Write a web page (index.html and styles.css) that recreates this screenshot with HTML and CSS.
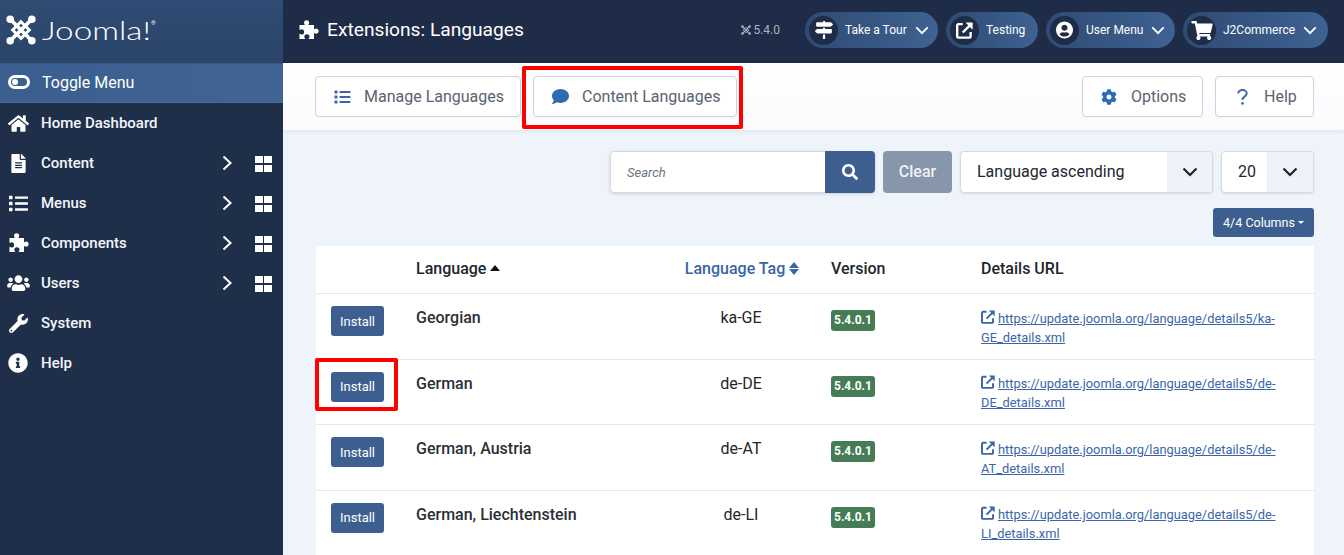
FILE: index.html
```html
<!DOCTYPE html>
<html lang="en">
<head>
<meta charset="utf-8">
<title>Extensions: Languages</title>
<link rel="stylesheet" href="styles.css">
</head>
<body>
<svg class="sprite" aria-hidden="true">
  <symbol id="i-home" viewBox="0 0 576 512"><path d="M280.37 148.26L96 300.11V464a16 16 0 0 0 16 16l112.06-.29a16 16 0 0 0 15.92-16V368a16 16 0 0 1 16-16h64a16 16 0 0 1 16 16v95.64a16 16 0 0 0 16 16.05L464 480a16 16 0 0 0 16-16V300L295.67 148.26a12.19 12.19 0 0 0-15.3 0zM571.6 251.47L488 182.56V44.05a12 12 0 0 0-12-12h-56a12 12 0 0 0-12 12v72.61L318.47 43a48 48 0 0 0-61 0L4.34 251.47a12 12 0 0 0-1.6 16.9l25.5 31A12 12 0 0 0 45.15 301l235.22-193.74a12.19 12.19 0 0 1 15.3 0L530.9 301a12 12 0 0 0 16.9-1.6l25.5-31a12 12 0 0 0-1.7-16.93z"/></symbol>
  <symbol id="i-puzzle" viewBox="0 0 20 20"><path d="M1 5H6.500C6.500 5 5.500 4 5.500 2.800A2.600 2.600 0 0 1 10.700 2.800C10.700 4 9.700 5 9.700 5H15.500V9.500C15.500 9.500 16.500 8.500 17.500 8.500A2.600 2.600 0 0 1 17.500 13.700C16.500 13.700 15.500 12.700 15.500 12.700V19H10C10 19 11 18 11 16.800A2.600 2.600 0 0 0 5.800 16.800C5.800 18 6.800 19 6.800 19H1V13.500C1 13.500 2 14.500 3 14.500A2.600 2.600 0 0 0 3 9.300C2 9.300 1 10.300 1 10.300Z"/></symbol>
  <symbol id="i-list" viewBox="0 0 512 512"><path d="M80 368H16a16 16 0 0 0-16 16v64a16 16 0 0 0 16 16h64a16 16 0 0 0 16-16v-64a16 16 0 0 0-16-16zm0-320H16A16 16 0 0 0 0 64v64a16 16 0 0 0 16 16h64a16 16 0 0 0 16-16V64a16 16 0 0 0-16-16zm0 160H16a16 16 0 0 0-16 16v64a16 16 0 0 0 16 16h64a16 16 0 0 0 16-16v-64a16 16 0 0 0-16-16zm416 176H176a16 16 0 0 0-16 16v32a16 16 0 0 0 16 16h320a16 16 0 0 0 16-16v-32a16 16 0 0 0-16-16zm0-320H176a16 16 0 0 0-16 16v32a16 16 0 0 0 16 16h320a16 16 0 0 0 16-16V80a16 16 0 0 0-16-16zm0 160H176a16 16 0 0 0-16 16v32a16 16 0 0 0 16 16h320a16 16 0 0 0 16-16v-32a16 16 0 0 0-16-16z"/></symbol>
  <symbol id="i-file" viewBox="0 0 384 512"><path d="M224 136V0H24C10.7 0 0 10.7 0 24v464c0 13.3 10.7 24 24 24h336c13.3 0 24-10.7 24-24V160H248c-13.2 0-24-10.8-24-24zm64 236c0 6.6-5.4 12-12 12H108c-6.6 0-12-5.4-12-12v-8c0-6.6 5.4-12 12-12h168c6.6 0 12 5.4 12 12v8zm0-64c0 6.6-5.4 12-12 12H108c-6.6 0-12-5.4-12-12v-8c0-6.6 5.4-12 12-12h168c6.6 0 12 5.4 12 12v8zm0-72v8c0 6.6-5.4 12-12 12H108c-6.6 0-12-5.4-12-12v-8c0-6.6 5.4-12 12-12h168c6.6 0 12 5.4 12 12zm96-114.1v6.1H256V0h6.1c6.4 0 12.5 2.5 17 7l97.9 98c4.5 4.5 7 10.6 7 16.9z"/></symbol>
  <symbol id="i-users" viewBox="0 0 640 512"><path d="M96 224c35.3 0 64-28.7 64-64s-28.7-64-64-64-64 28.7-64 64 28.7 64 64 64zm448 0c35.3 0 64-28.7 64-64s-28.7-64-64-64-64 28.7-64 64 28.7 64 64 64zm32 32h-64c-17.6 0-33.5 7.1-45.1 18.6 40.3 22.1 68.9 62 75.1 109.4h66c17.7 0 32-14.3 32-32v-32c0-35.3-28.7-64-64-64zm-256 0c61.9 0 112-50.1 112-112S381.9 32 320 32 208 82.1 208 144s50.1 112 112 112zm76.8 32h-8.3c-20.8 10-43.9 16-68.5 16s-47.6-6-68.5-16h-8.3C179.6 288 128 339.6 128 403.2V432c0 26.5 21.5 48 48 48h288c26.5 0 48-21.5 48-48v-28.8c0-63.6-51.6-115.2-115.2-115.2zm-223.7-13.4C161.5 263.1 145.6 256 128 256H64c-35.3 0-64 28.7-64 64v32c0 17.7 14.3 32 32 32h65.9c6.3-47.4 34.9-87.3 75.2-109.4z"/></symbol>
  <symbol id="i-wrench" viewBox="0 0 512 512"><path d="M507.73 109.1c-2.24-9.03-13.54-12.09-20.12-5.51l-74.36 74.36-67.88-11.31-11.31-67.88 74.36-74.36c6.62-6.62 3.43-17.9-5.66-20.16-47.38-11.74-99.55.91-136.58 37.93-39.64 39.64-50.55 97.1-34.05 147.2L18.74 402.76c-24.99 24.99-24.99 65.51 0 90.5 24.99 24.99 65.51 24.99 90.5 0l213.21-213.21c50.12 16.71 107.47 5.68 147.37-34.22 37.07-37.07 49.7-89.32 37.91-136.73zM64 472c-13.25 0-24-10.75-24-24 0-13.26 10.75-24 24-24s24 10.74 24 24c0 13.25-10.75 24-24 24z"/></symbol>
  <symbol id="i-info" viewBox="0 0 512 512"><path d="M256 8C119.043 8 8 119.083 8 256c0 136.997 111.043 248 248 248s248-111.003 248-248C504 119.083 392.957 8 256 8zm0 110c23.196 0 42 18.804 42 42s-18.804 42-42 42-42-18.804-42-42 18.804-42 42-42zm56 254c0 6.627-5.373 12-12 12h-88c-6.627 0-12-5.373-12-12v-24c0-6.627 5.373-12 12-12h12v-64h-12c-6.627 0-12-5.373-12-12v-24c0-6.627 5.373-12 12-12h64c6.627 0 12 5.373 12 12v100h12c6.627 0 12 5.373 12 12v24z"/></symbol>
  <symbol id="i-cart" viewBox="0 0 576 512"><path d="M528.12 301.319l47.273-208C578.806 78.301 567.391 64 551.99 64H159.208l-9.166-44.81C147.758 8.021 137.93 0 126.529 0H24C10.745 0 0 10.745 0 24v16c0 13.255 10.745 24 24 24h69.883l70.248 343.435C147.325 417.1 136 435.222 136 456c0 30.928 25.072 56 56 56s56-25.072 56-56c0-15.674-6.447-29.835-16.824-40h209.647C430.447 426.165 424 440.326 424 456c0 30.928 25.072 56 56 56s56-25.072 56-56c0-22.172-12.888-41.332-31.579-50.405l5.517-24.276c3.413-15.018-8.002-29.319-23.403-29.319H218.117l-6.545-32h293.145c11.206 0 20.92-7.754 23.403-18.681z"/></symbol>
  <symbol id="i-user" viewBox="0 0 496 512"><path d="M248 8C111 8 0 119 0 256s111 248 248 248 248-111 248-248S385 8 248 8zm0 96c48.6 0 88 39.4 88 88s-39.4 88-88 88-88-39.4-88-88 39.4-88 88-88zm0 344c-58.7 0-111.3-26.6-146.5-68.2 18.8-35.4 55.6-59.8 98.5-59.8 2.4 0 4.8.4 7.1 1.1 13 4.2 26.6 6.9 40.9 6.9 14.3 0 28-2.7 40.9-6.9 2.3-.7 4.7-1.1 7.1-1.1 42.9 0 79.7 24.4 98.5 59.8C359.3 421.4 306.7 448 248 448z"/></symbol>
  <symbol id="i-signs" viewBox="0 0 512 512"><path d="M507.31 84.69L464 41.37c-6-6-14.14-9.37-22.63-9.37H288V16c0-8.84-7.16-16-16-16h-32c-8.84 0-16 7.16-16 16v16H56c-13.25 0-24 10.75-24 24v80c0 13.25 10.75 24 24 24h385.37c8.49 0 16.62-3.37 22.63-9.37l43.31-43.31c6.25-6.26 6.25-16.38 0-22.63zM224 496c0 8.84 7.16 16 16 16h32c8.84 0 16-7.16 16-16V384h-64v112zm232-272H288v-32h-64v32H70.63c-8.49 0-16.62 3.37-22.63 9.37L4.69 276.69c-6.25 6.25-6.25 16.38 0 22.63L48 342.63c6 6 14.14 9.37 22.63 9.37H456c13.25 0 24-10.75 24-24v-80c0-13.25-10.75-24-24-24z"/></symbol>
  <symbol id="i-comment" viewBox="0 0 512 512"><path d="M256 32C114.6 32 0 125.1 0 240c0 49.6 21.4 95 57 130.7C44.5 421.1 2.7 466 2.2 466.5c-2.2 2.3-2.8 5.7-1.5 8.7S4.8 480 8 480c66.3 0 116-31.8 140.6-51.4 32.7 12.3 69 19.4 107.4 19.4 141.4 0 256-93.1 256-208S397.4 32 256 32z"/></symbol>
  <symbol id="i-cog" viewBox="0 0 512 512"><path d="M487.4 315.7l-42.6-24.6c4.3-23.2 4.3-47 0-70.2l42.6-24.6c4.9-2.8 7.1-8.6 5.5-14-11.1-35.6-30-67.8-54.7-94.6-3.8-4.1-10-5.1-14.8-2.3L380.8 110c-17.9-15.4-38.5-27.3-60.8-35.1V25.8c0-5.6-3.9-10.5-9.4-11.7-36.7-8.2-74.3-7.8-109.2 0-5.5 1.2-9.4 6.1-9.4 11.7V75c-22.2 7.9-42.8 19.8-60.8 35.1L88.7 85.5c-4.9-2.8-11-1.9-14.8 2.3-24.7 26.7-43.6 58.9-54.7 94.6-1.7 5.4.6 11.2 5.5 14L67.3 221c-4.3 23.2-4.3 47 0 70.2l-42.6 24.6c-4.9 2.8-7.1 8.6-5.5 14 11.1 35.6 30 67.8 54.7 94.6 3.8 4.1 10 5.1 14.8 2.3l42.6-24.6c17.9 15.4 38.5 27.3 60.8 35.1v49.2c0 5.6 3.9 10.5 9.4 11.7 36.7 8.2 74.3 7.8 109.2 0 5.5-1.2 9.4-6.1 9.4-11.7v-49.2c22.2-7.9 42.8-19.8 60.8-35.1l42.6 24.6c4.9 2.8 11 1.9 14.8-2.3 24.7-26.7 43.6-58.9 54.7-94.6 1.5-5.5-.7-11.3-5.6-14.1zM256 336c-44.1 0-80-35.9-80-80s35.9-80 80-80 80 35.9 80 80-35.9 80-80 80z"/></symbol>
  <symbol id="i-search" viewBox="0 0 512 512"><path d="M505 442.7L405.3 343c-4.5-4.5-10.6-7-17-7H372c27.6-35.3 44-79.7 44-128C416 93.1 322.9 0 208 0S0 93.1 0 208s93.1 208 208 208c48.3 0 92.7-16.4 128-44v16.3c0 6.4 2.5 12.5 7 17l99.7 99.7c9.4 9.4 24.6 9.4 33.9 0l28.3-28.3c9.4-9.4 9.4-24.6.1-34zM208 336c-70.7 0-128-57.2-128-128 0-70.7 57.2-128 128-128 70.7 0 128 57.2 128 128 0 70.7-57.2 128-128 128z"/></symbol>
  <symbol id="i-question" viewBox="0 0 12 18"><path d="M1.200 5.200C1.200 2.800 3.400 1.200 6 1.200S10.800 2.800 10.800 5C10.800 8.300 6 8.300 6 12.200" fill="none" stroke="currentColor" stroke-width="2.200"/><circle cx="6" cy="16.200" r="1.500"/></symbol>
  <symbol id="i-ext" viewBox="1.500 1.500 21.500 21"><path d="M10 4H4.500A1.500 1.500 0 0 0 3 5.500V19.500A1.500 1.500 0 0 0 4.500 21H18.500A1.500 1.500 0 0 0 20 19.500V14" fill="none" stroke="currentColor" stroke-width="3"/><path d="M10 14.500L20 4.500" fill="none" stroke="currentColor" stroke-width="3"/><path d="M13.500 2H22.500V11Z"/></symbol>
  <symbol id="i-chev" viewBox="0 0 16 10"><path d="M1.500 1.500L8 8L14.500 1.500" fill="none" stroke="currentColor" stroke-width="2.200"/></symbol>
  <symbol id="i-right" viewBox="0 0 10 16"><path d="M1.500 1.500L8.500 8L1.500 14.500" fill="none" stroke="currentColor" stroke-width="2"/></symbol>
  <symbol id="i-joomla" viewBox="0 0 36 36"><g fill="none" stroke="currentColor"><path d="M6 6L30 30M30 6L6 30" stroke-width="4.500"/><path d="M18 8L28 18L18 28L8 18Z" stroke-width="3.500"/></g><circle cx="5" cy="5" r="4.500" fill="currentColor"/><circle cx="31" cy="5" r="4.500" fill="currentColor"/><circle cx="5" cy="31" r="4.500" fill="currentColor"/><circle cx="31" cy="31" r="4.500" fill="currentColor"/></symbol>
</svg>

<div class="app">
  <aside class="sidebar">
    <div class="brand">
      <svg class="brand-mark"><use href="#i-joomla"/></svg>
      <span class="brand-name">Joomla!</span><sup class="brand-reg">®</sup>
    </div>
    <a class="toggle"><span class="toggle-icon"><span class="toggle-knob"></span></span><span class="toggle-text">Toggle Menu</span></a>
    <nav class="nav">
      <a class="nav-item"><span class="nav-ic"><svg class="ic-home"><use href="#i-home"/></svg></span><span class="nav-label">Home Dashboard</span></a>
      <a class="nav-item"><span class="nav-ic"><svg class="ic-file"><use href="#i-file"/></svg></span><span class="nav-label">Content</span><svg class="nav-arrow"><use href="#i-right"/></svg><span class="nav-grid"><i></i><i></i><i></i><i></i></span></a>
      <a class="nav-item"><span class="nav-ic"><svg class="ic-list"><use href="#i-list"/></svg></span><span class="nav-label">Menus</span><svg class="nav-arrow"><use href="#i-right"/></svg><span class="nav-grid"><i></i><i></i><i></i><i></i></span></a>
      <a class="nav-item"><span class="nav-ic"><svg class="ic-puzzle"><use href="#i-puzzle"/></svg></span><span class="nav-label">Components</span><svg class="nav-arrow"><use href="#i-right"/></svg><span class="nav-grid"><i></i><i></i><i></i><i></i></span></a>
      <a class="nav-item"><span class="nav-ic"><svg class="ic-users"><use href="#i-users"/></svg></span><span class="nav-label">Users</span><svg class="nav-arrow"><use href="#i-right"/></svg><span class="nav-grid"><i></i><i></i><i></i><i></i></span></a>
      <a class="nav-item"><span class="nav-ic"><svg class="ic-wrench"><use href="#i-wrench"/></svg></span><span class="nav-label">System</span></a>
      <a class="nav-item"><span class="nav-ic"><svg class="ic-info"><use href="#i-info"/></svg></span><span class="nav-label">Help</span></a>
    </nav>
  </aside>

  <div class="main">
    <header class="topbar">
      <svg class="title-icon"><use href="#i-puzzle"/></svg>
      <h1 class="title">Extensions: Languages</h1>
      <div class="top-right">
        <span class="version"><svg class="version-mark"><use href="#i-joomla"/></svg>5.4.0</span>
        <a class="pill pill-tour"><span class="pill-ic"><svg class="s-signs"><use href="#i-signs"/></svg></span><span class="pill-text">Take a Tour</span><svg class="pill-chev"><use href="#i-chev"/></svg></a>
        <a class="pill pill-test"><span class="pill-ic"><svg class="s-ext"><use href="#i-ext"/></svg></span><span class="pill-text">Testing</span></a>
        <a class="pill pill-user"><span class="pill-ic"><svg class="s-user"><use href="#i-user"/></svg></span><span class="pill-text">User Menu</span><svg class="pill-chev"><use href="#i-chev"/></svg></a>
        <a class="pill pill-cart"><span class="pill-ic"><svg class="s-cart"><use href="#i-cart"/></svg></span><span class="pill-text">J2Commerce</span><svg class="pill-chev"><use href="#i-chev"/></svg></a>
      </div>
    </header>

    <div class="subhead">
      <a class="tbtn tbtn-manage"><svg class="tb-list"><use href="#i-list"/></svg>Manage Languages</a>
      <a class="tbtn tbtn-content"><svg class="tb-comment"><use href="#i-comment"/></svg>Content Languages</a>
      <span class="spacer"></span>
      <a class="tbtn tbtn-options"><svg class="tb-cog"><use href="#i-cog"/></svg>Options</a>
      <a class="tbtn tbtn-help"><svg class="tb-q"><use href="#i-question"/></svg>Help</a>
    </div>

    <section class="content">
      <div class="filters">
        <div class="search"><span class="search-input">Search</span><span class="search-btn"><svg><use href="#i-search"/></svg></span></div>
        <a class="clear">Clear</a>
        <div class="select select-sort"><span class="select-val">Language ascending</span><span class="select-arrow"><svg><use href="#i-chev"/></svg></span></div>
        <div class="select select-num"><span class="select-val">20</span><span class="select-arrow"><svg><use href="#i-chev"/></svg></span></div>
      </div>
      <div class="columns-row"><a class="columns-btn">4/4 Columns<span class="caret"></span></a></div>

      <table class="langs">
        <colgroup><col class="c1"><col class="c2"><col class="c3"><col class="c4"><col class="c5"></colgroup>
        <thead>
          <tr>
            <th></th>
            <th>Language <span class="sort-up"></span></th>
            <th class="center tag-head">Language Tag <span class="sort-both"><i></i><i></i></span></th>
            <th>Version</th>
            <th>Details URL</th>
          </tr>
        </thead>
        <tbody>
          <tr><td><a class="install">Install</a></td><td class="name">Georgian</td><td class="center">ka-GE</td><td><span class="badge">5.4.0.1</span></td><td class="url"><a class="link"><svg class="link-ic"><use href="#i-ext"/></svg>https://update.joomla.org/language/details5/ka-GE_details.xml</a></td></tr>
          <tr><td><a class="install">Install</a></td><td class="name">German</td><td class="center">de-DE</td><td><span class="badge">5.4.0.1</span></td><td class="url"><a class="link"><svg class="link-ic"><use href="#i-ext"/></svg>https://update.joomla.org/language/details5/de-DE_details.xml</a></td></tr>
          <tr><td><a class="install">Install</a></td><td class="name">German, Austria</td><td class="center">de-AT</td><td><span class="badge">5.4.0.1</span></td><td class="url"><a class="link"><svg class="link-ic"><use href="#i-ext"/></svg>https://update.joomla.org/language/details5/de-AT_details.xml</a></td></tr>
          <tr><td><a class="install">Install</a></td><td class="name">German, Liechtenstein</td><td class="center">de-LI</td><td><span class="badge">5.4.0.1</span></td><td class="url"><a class="link"><svg class="link-ic"><use href="#i-ext"/></svg>https://update.joomla.org/language/details5/de-LI_details.xml</a></td></tr>
        </tbody>
      </table>
    </section>
  </div>
</div>

<div class="mark mark-content"></div>
<div class="mark mark-install"></div>
</body>
</html>
```
FILE: styles.css
```css
* { box-sizing: border-box; }
html, body { margin: 0; height: 100%; overflow: hidden; }
body { font-family: Roboto, "Liberation Sans", sans-serif; color: #22262e; background: #eff3fa; position: relative; }
a { text-decoration: none; color: inherit; }
svg { fill: currentColor; display: block; }
.sprite { position: absolute; width: 0; height: 0; }

.app { display: grid; grid-template-columns: 283px 1fr; height: 555px; overflow: hidden; }

/* sidebar */
.sidebar { background: #1f2e49; color: #fff; display: flex; flex-direction: column; }
.brand { height: 63px; background: linear-gradient(180deg, #2f4c74, #2b4468); display: flex; align-items: center; padding-left: 6px; padding-bottom: 3px; color: #fff; }
.brand-mark { width: 30px; height: 30px; flex: none; }
.brand-name { display: inline-block; font-family: Lato, Roboto, sans-serif; font-weight: 300; font-size: 25px; margin-left: 6px; margin-right: 27px; line-height: 1; transform: scaleX(1.33); transform-origin: left center; }
.brand-reg { font-size: 6px; margin-top: -16px; margin-left: 0; }
.toggle { height: 40px; background: linear-gradient(90deg, #3a5f8f, #406595); border-top: 1px solid #345680; border-bottom: 1px solid #4b6e9a; display: flex; align-items: center; padding-left: 8px; gap: 13px; font-size: 16px; color: #fff; }
.toggle-text { margin-top: -2px; margin-left: -1px; }
.toggle-icon { width: 22px; height: 14px; margin-top: -2px; border-radius: 7px; background: #fff; padding: 3px; display: block; flex: none; }
.toggle-icon .toggle-knob { display: block; width: 16px; height: 8px; border-radius: 4px; background: #3a5f8f; position: relative; }
.toggle-knob::after { content: ""; position: absolute; left: 1px; top: 1px; width: 6px; height: 6px; border-radius: 50%; background: #fff; }
.nav { display: flex; flex-direction: column; }
.nav-item { height: 40px; display: flex; align-items: center; font-size: 15px; font-weight: 500; color: #f3f6fb; }
.nav-ic { width: 41px; flex: none; padding-left: 7px; display: flex; justify-content: flex-start; align-items: center; }
.nav-ic svg { color: #fff; }
.ic-home { width: 21px; height: 19px; margin-left: 1px; }
.ic-file { width: 15px; height: 19px; margin-left: 4px; }
.ic-list { width: 19px; height: 19px; margin-left: 2px; }
.ic-puzzle { width: 21px; height: 20px; margin-left: 1px; }
.ic-users { width: 23px; height: 18px; }
.ic-wrench { width: 19px; height: 19px; margin-left: 2px; }
.ic-info { width: 20px; height: 20px; margin-left: 1px; }
.nav-label { flex: 1; }
.nav-arrow { width: 10px; height: 16px; margin-right: 23px; color: #fff; }
.nav-grid { display: grid; grid-template-columns: 8px 8px; grid-auto-rows: 7px; gap: 2px 1px; width: 17px; margin-right: 11px; margin-top: 2px; }
.nav-grid i { background: #fff; display: block; }

/* topbar */
.main { display: flex; flex-direction: column; min-width: 0; }
.topbar { height: 63px; flex: none; background: #1e2c48; display: flex; align-items: center; color: #fff; padding-left: 15px; }
.title-icon { width: 21px; height: 20px; margin-right: 8px; flex: none; margin-top: -3px; }
.title { margin: 0; font-size: 19.200px; font-weight: 400; margin-top: -5px; }
.top-right { margin-left: auto; display: flex; align-items: center; gap: 8px; padding-right: 16px; margin-top: -3px; }
.version { display: flex; align-items: center; gap: 2px; font-size: 12px; color: #a9b4c5; margin-right: 17px; }
.version-mark { width: 10px; height: 10px; }
.pill { height: 36px; border-radius: 18px; background: linear-gradient(90deg, #2f4b73, #3e6292); display: flex; align-items: center; padding-left: 4px; color: #fff; font-size: 12px; }
.pill-ic { width: 29px; height: 29px; border-radius: 50%; background: #1e2c48; display: flex; align-items: center; justify-content: center; flex: none; }
.pill-text { margin-left: 7px; }
.pill-chev { width: 14px; height: 9px; margin-left: 8px; }
.pill-tour { width: 133px; }
.pill-test { width: 92px; }
.pill-user { width: 129px; }
.pill-cart { width: 145px; }
.s-signs { width: 18px; height: 18px; }
.s-ext { width: 17px; height: 17px; }
.s-user { width: 17px; height: 18px; }
.s-cart { width: 22px; height: 19px; }

/* subhead */
.subhead { height: 67px; flex: none; background: linear-gradient(180deg, #fff, #f9fbfd); box-shadow: 0 2px 4px rgba(60, 80, 120, 0.08); display: flex; align-items: center; padding: 0 30px 0 32px; gap: 12px; position: relative; }
.spacer { flex: 1; }
.tbtn { height: 41px; background: #fff; border: 1px solid #d0d3d9; border-radius: 4px; display: flex; align-items: center; font-size: 16px; color: #5b6270; box-shadow: 0 1px 2px rgba(0, 0, 0, 0.03); }
.tbtn svg { color: #2f6ab5; flex: none; }
.tbtn-manage { width: 206px; padding-left: 18px; }
.tbtn-content { width: 204px; padding-left: 18px; }
.tbtn-options { width: 121px; padding-left: 18px; }
.tbtn-help { width: 99px; padding-left: 21px; }
.tb-list { width: 17px; height: 16px; margin-right: 13px; color: #3a66ab !important; }
.tb-comment { width: 17px; height: 17px; margin-right: 13px; }
.tb-cog { width: 16px; height: 16px; margin-right: 14px; }
.tb-q { width: 11px; height: 16px; margin-right: 16px; color: #3a66ab !important; }

/* filters */
.content { padding: 21px 30px 0 33px; flex: 1; min-height: 0; }
.filters { display: flex; justify-content: flex-end; gap: 8px; height: 42px; }
.search { width: 265px; display: flex; border-radius: 4px; box-shadow: 0 1px 3px rgba(60, 80, 120, 0.2); }
.search-input { flex: 1; background: #fff; border: 1px solid #d6d9e0; border-right: 0; border-radius: 4px 0 0 4px; font-size: 13px; font-style: italic; color: #6c7380; display: flex; align-items: center; padding-left: 16px; padding-top: 1px; }
.search-btn { width: 50px; background: #3d5f8f; border-radius: 0 4px 4px 0; display: flex; align-items: center; justify-content: center; color: #fff; }
.search-btn svg { width: 16px; height: 16px; }
.clear { width: 69px; background: #8796aa; border-radius: 4px; color: #eef1f6; font-size: 16px; font-weight: 500; display: flex; align-items: center; justify-content: center; padding-bottom: 2px; }
.select { background: #fff; border: 1px solid #d6d9e0; border-radius: 4px; display: flex; box-shadow: 0 1px 2px rgba(60, 80, 120, 0.12); overflow: hidden; }
.select-sort { width: 253px; }
.select-num { width: 93px; }
.select-val { flex: 1; font-size: 16px; color: #22262e; display: flex; align-items: center; padding-left: 16px; padding-bottom: 2px; }
.select-arrow { width: 45px; background: #eff2f8; display: flex; align-items: center; justify-content: center; color: #1a2230; }
.select-num .select-arrow { width: 46px; }
.select-arrow svg { width: 16px; height: 10px; }
.columns-row { display: flex; justify-content: flex-end; margin-top: 15px; }
.columns-btn { width: 101px; height: 29px; background: #3d5f8f; border-radius: 3px; color: #fff; font-size: 12.500px; display: flex; align-items: center; justify-content: center; }
.caret { width: 0; height: 0; border-left: 3px solid transparent; border-right: 3px solid transparent; border-top: 3px solid #fff; margin-left: 3px; }

/* table */
.langs { width: 998px; margin-top: 9px; border-collapse: separate; border-spacing: 0; table-layout: fixed; background: #fff; font-size: 16px; }
.c1 { width: 85px; }
.c2 { width: 268px; }
.c3 { width: 146px; }
.c4 { width: 150px; }
.c5 { width: 349px; }
.langs th { height: 48px; text-align: left; font-weight: 500; padding: 0 16px 2px 15px; border-bottom: 1px solid #e4e6ea; vertical-align: middle; color: #22262e; }
.langs th:nth-child(n+4) { padding-left: 16px; }
.langs th.center, .langs td.center { text-align: center; }
.langs .tag-head { color: #3a66a6; padding: 0 0 2px; white-space: nowrap; }
.langs td { height: 65.500px; padding: 12px 15px 0; vertical-align: top; border-bottom: 1px solid #e4e6ea; }
.langs td:nth-child(4) { padding-left: 16px; }
.langs td.center { padding: 14.250px 2px 0 0; }
.langs td.name { font-weight: 500; color: #2b2f36; padding-top: 13.250px; line-height: 21px; }
.sort-up { display: inline-block; width: 0; height: 0; border-left: 5px solid transparent; border-right: 5px solid transparent; border-bottom: 6px solid #111; vertical-align: 3px; }
.sort-both { display: inline-flex; flex-direction: column; gap: 1px; vertical-align: middle; margin-top: -3px; }
.sort-both i { display: block; width: 0; height: 0; border-left: 5.500px solid transparent; border-right: 5.500px solid transparent; }
.sort-both i:first-child { border-bottom: 6px solid #3a66a6; }
.sort-both i:last-child { border-top: 6px solid #3a66a6; }
.install { display: inline-flex; width: 53px; height: 30px; background: #3d5f8f; border-radius: 3px; color: #fff; font-size: 13px; align-items: center; justify-content: center; }
.badge { display: inline-block; width: 44px; height: 21px; margin-top: 4px; line-height: 21px; text-align: center; background: #457c55; color: #fff; border-radius: 3px; font-size: 12px; font-weight: 700; }
.langs td.url { padding: 14.600px 30px 0 16px; font-size: 12.860px; line-height: 19.200px; }
.link { color: #3a66a8; text-decoration: underline; }
.link-ic { display: inline-block; width: 14px; height: 14px; vertical-align: -1px; margin-right: 3px; }

/* annotation boxes */
.mark { position: absolute; border: 4px solid #f00; border-radius: 2px; pointer-events: none; }
.mark-content { left: 522px; top: 66px; width: 221px; height: 63px; }
.mark-install { left: 315px; top: 358px; width: 83px; height: 53px; }
```
